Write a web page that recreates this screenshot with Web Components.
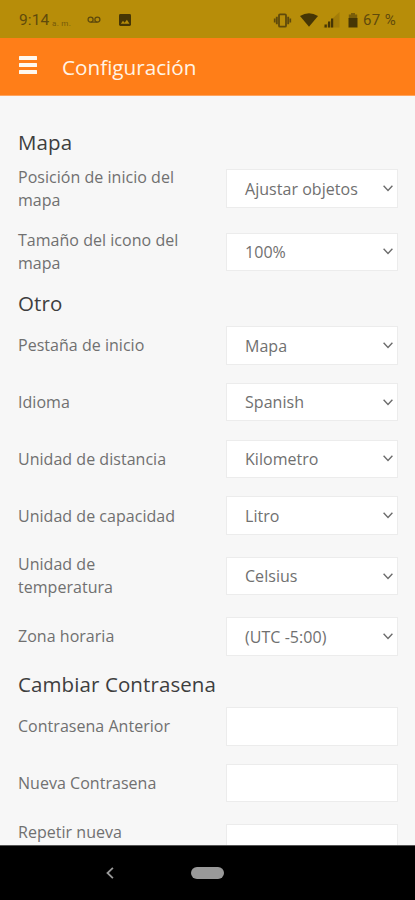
<!DOCTYPE html>
<html lang="es">
<head>
<meta charset="utf-8">
<title>Configuración</title>
<style>
html,body{margin:0;height:100%;overflow:hidden}
body{font-family:"Open Sans","Noto Sans",sans-serif;background:#f7f7f7}
</style>
</head>
<body>
<settings-screen></settings-screen>
<script>
const define = (name, html, setup) => {
  const tpl = document.createElement('template');
  tpl.innerHTML = html;
  customElements.define(name, class extends HTMLElement {
    constructor() {
      super();
      this.attachShadow({mode: 'open'}).append(tpl.content.cloneNode(true));
    }
    connectedCallback() { if (setup) setup(this, this.shadowRoot); }
  });
};

define('status-bar', `
<style>
:host{display:flex;align-items:center;box-sizing:border-box;height:38px;padding:2px 18px 0 19px;background:#b78d09;color:#5f4a0c;font:15.5px/20px Roboto,sans-serif}
svg{display:block;flex:none}
small{font-size:8px;letter-spacing:.3px;margin:7px 0 0 2px;line-height:12px;width:21px;white-space:nowrap;opacity:.75}
.time{letter-spacing:.1px;width:31px;white-space:nowrap}
.mail{margin-left:14px}.pic{margin-left:18px}
.right{margin-left:auto;display:flex;align-items:center}
.pct{margin-left:5px;width:34px;font-size:15px;letter-spacing:.4px;white-space:nowrap}
</style>
<span class="time">9:14</span><small>a. m.</small>
<svg class="mail" width="14" height="8" viewBox="0 0 14 8" fill="none" stroke="#5f4a0c" stroke-width="1.3"><circle cx="3.6" cy="3.6" r="2.5"/><circle cx="10.4" cy="3.6" r="2.5"/><path d="M3.6 6.1h6.8"/></svg>
<svg class="pic" width="12" height="12" viewBox="0 0 12 12"><rect width="12" height="12" rx="1.4" fill="#463605"/><path d="M1.8 9.8l2.2-3 1.6 1.9 2.3-3 2.6 4.1z" fill="#b78d09"/></svg>
<div class="right">
<svg width="19" height="15" viewBox="0 0 19 15" fill="none" stroke="#5f4a0c"><rect x="6" y="1.3" width="7" height="12.4" rx="1" stroke-width="1.8"/><path d="M3.800 3.700v7.600M15.200 3.700v7.600" stroke-width="1.900"/><path d="M1.700 5.500v4M17.300 5.500v4" stroke-width="1.700"/></svg>
<svg style="margin-left:8px" width="18" height="14" viewBox="0 0 18 14"><path d="M0 3.1Q9-2.4 18 3.1L9 13.8z" fill="#463605"/></svg>
<svg style="margin-left:5px" width="17" height="16" viewBox="0 0 17 16"><path d="M0 15.5L16.5 0v15.5z" fill="#947008" opacity=".55"/><path d="M1.5 12.5h2.3v3H1.500zM5 9.500h2.200v6H5zM8 6.500h2.200v9H8z" fill="#463605"/></svg>
<svg style="margin-left:8px" width="10" height="15" viewBox="0 0 10 15"><path d="M3 0h4v1.500h2.200v4H.8v-4H3z" fill="#7a5e09"/><path d="M.5 5h9v9.500h-9z" fill="#463605"/></svg>
<span class="pct">67 %</span>
</div>`);

define('app-header', `
<style>
:host{display:flex;align-items:center;box-sizing:border-box;height:58px;padding:0 19px;background:#ff7e18;border-bottom:1px solid #ffa45e;color:#fff4e6}
.menu{display:grid;gap:3.3px;width:18px;margin:-3px 25px 0 0}
.menu i{height:4px;background:#fff8ee;border-radius:.5px}
h1{margin:0;font-size:20.7px;line-height:30px;font-weight:400;white-space:nowrap;padding-top:1px}
</style>
<div class="menu"><i></i><i></i><i></i></div><h1><slot></slot></h1>`);

define('settings-group', `
<style>
:host{display:block}
h2{margin:0;font-size:20.5px;line-height:28px;font-weight:400;color:#3e3e3e;letter-spacing:.1px;white-space:nowrap}
.rows{display:grid;gap:var(--row-gap,18.3px);padding-top:var(--head-gap,9px)}
</style>
<h2></h2><div class="rows"><slot></slot></div>`,
(el, root) => { root.querySelector('h2').textContent = el.getAttribute('heading'); });

define('setting-row', `
<style>
:host{display:grid;grid-template-columns:172px 172px;column-gap:36px;align-items:center}
:host([tall]){grid-template-rows:46px}
:host([tall]) span{align-self:start}
span{font-size:16px;line-height:23px;color:#707070;letter-spacing:.03px}
:host([single]) span{padding-top:1px}
</style>
<span></span><slot></slot>`,
(el, root) => { root.querySelector('span').textContent = el.getAttribute('label'); });

define('select-box', `
<style>
:host{display:flex;align-items:center;justify-content:space-between;box-sizing:border-box;height:38.4px;padding:0 4px 0 18px;background:#fff;border:1px solid #ececec;color:#707070;font-size:16px;line-height:23px;letter-spacing:.04px;white-space:nowrap}
span{padding-top:1.200px}
svg{display:block}
</style>
<span><slot></slot></span><svg width="10" height="7" viewBox="0 0 10 7" fill="none" stroke="#6c6c6c" stroke-width="1.4"><path d="M.6.8L5 5.400 9.400.8"/></svg>`);

define('text-box', `
<style>:host{display:block;box-sizing:border-box;height:38.4px;background:#fff;border:1px solid #ececec}</style>`);

define('nav-bar', `
<style>
:host{display:flex;align-items:center;box-sizing:border-box;height:55px;background:#000;border-top:1px solid #555;padding-left:106px}
b{width:33px;height:12px;border-radius:6px;background:#999;margin-left:77px}
svg{display:block}
</style>
<svg width="8" height="12" viewBox="0 0 8 12" fill="none" stroke="#999" stroke-width="1.8"><path d="M6.900.8L1.500 6l5.400 5.200"/></svg><b></b>`);

define('settings-screen', `
<style>
:host{display:flex;flex-direction:column;height:900px;width:415px;overflow:hidden;background:#f7f7f7}
status-bar,app-header,nav-bar{flex:none}
main{flex:1;min-height:0;overflow:hidden;padding:32px 18px 0;display:flex;flex-direction:column}
settings-group{flex:none}
</style>
<status-bar></status-bar>
<app-header>Configuración</app-header>
<main>
<settings-group heading="Mapa" style="--row-gap:17.3px;--head-gap:9.500px">
<setting-row label="Posición de inicio del mapa"><select-box>Ajustar objetos</select-box></setting-row>
<setting-row label="Tamaño del icono del mapa"><select-box>100%</select-box></setting-row>
</settings-group>
<settings-group heading="Otro" style="margin-top:14.500px">
<setting-row single label="Pestaña de inicio"><select-box>Mapa</select-box></setting-row>
<setting-row single label="Idioma"><select-box>Spanish</select-box></setting-row>
<setting-row single label="Unidad de distancia"><select-box>Kilometro</select-box></setting-row>
<setting-row single label="Unidad de capacidad"><select-box>Litro</select-box></setting-row>
<setting-row label="Unidad de temperatura"><select-box>Celsius</select-box></setting-row>
<setting-row label="Zona horaria"><select-box>(UTC -5:00)</select-box></setting-row>
</settings-group>
<settings-group heading="Cambiar Contrasena" style="margin-top:14.500px">
<setting-row single label="Contrasena Anterior"><text-box></text-box></setting-row>
<setting-row single label="Nueva Contrasena"><text-box></text-box></setting-row>
<setting-row tall label="Repetir nueva"><text-box></text-box></setting-row>
</settings-group>
</main>
<nav-bar></nav-bar>`);
</script>
</body>
</html>
